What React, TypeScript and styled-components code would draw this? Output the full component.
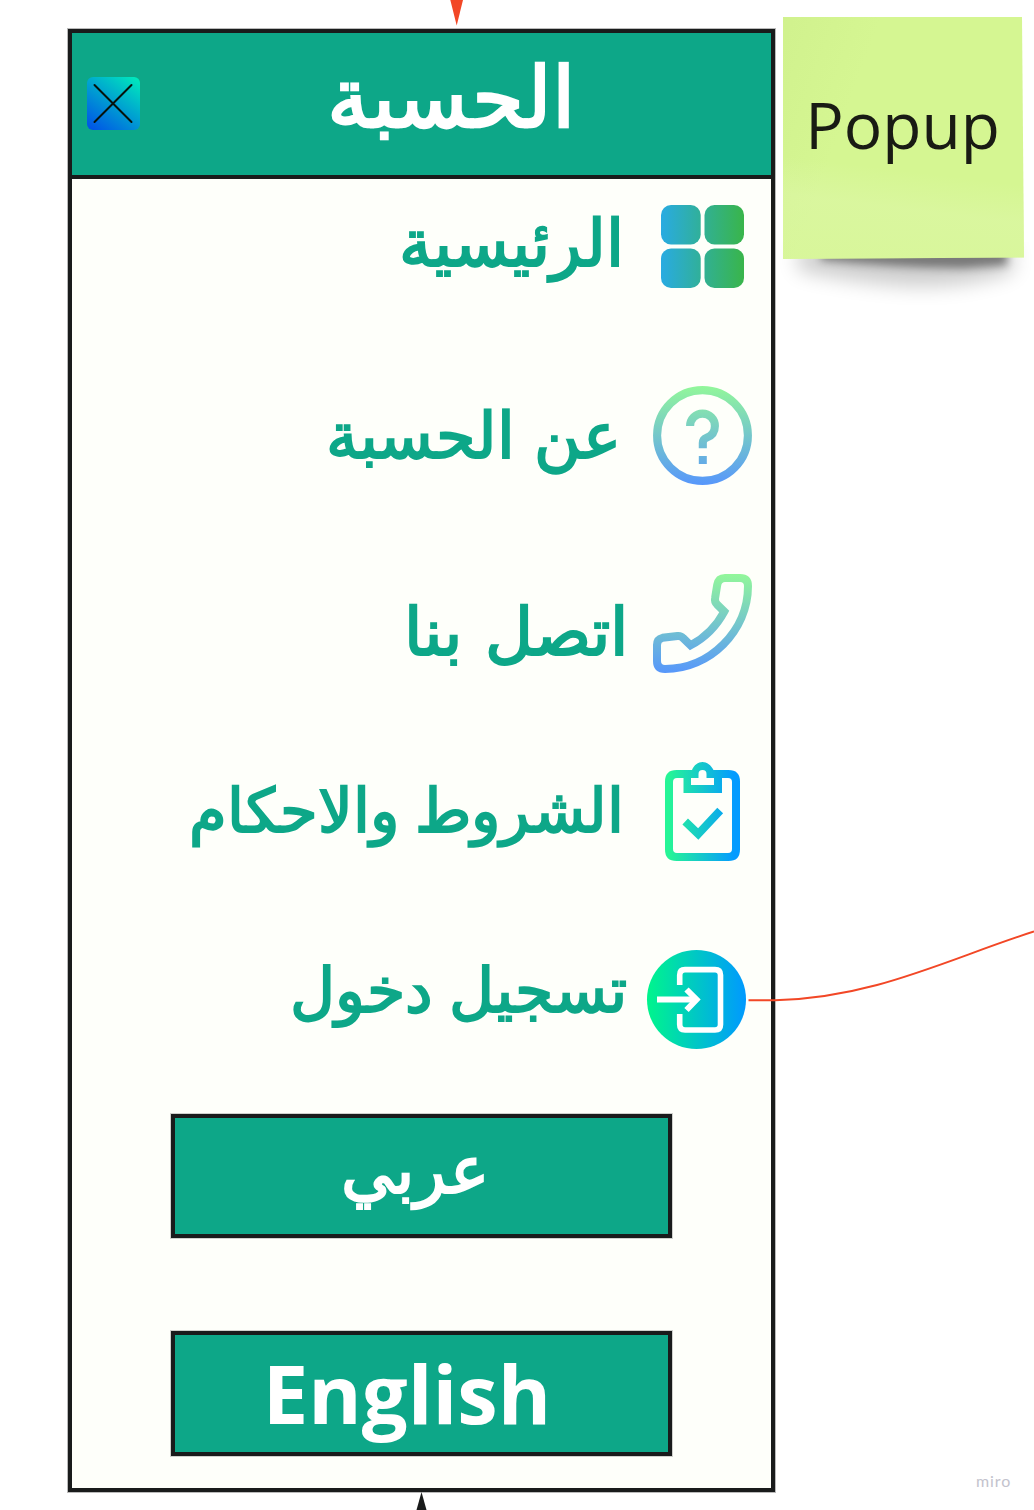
import React from "react";
import styled, { createGlobalStyle } from "styled-components";

const GlobalStyle = createGlobalStyle`
  *, *::before, *::after { box-sizing: border-box; }
  body { margin: 0; background: #fff; }
`;

const INK = "#191b1b";
const GREEN = "#0da788";
const PAPER = "#fefffa";
const FONT = `"Open Sans", serif`;

const Board = styled.main`
  position: relative;
  display: flex;
  align-items: flex-start;
  width: 1034px;
  height: 1510px;
  padding-left: 68px;
  overflow: hidden;
  background: #fff;
  font-family: ${FONT};
`;

const Phone = styled.section`
  display: flex;
  flex-direction: column;
  width: 707px;
  height: 1463px;
  margin-top: 29px;
  border: 4px solid ${INK};
  background: ${PAPER};
  box-shadow: 0 0 0 1px rgba(25, 27, 27, 0.3);
`;

const Header = styled.header`
  display: flex;
  align-items: center;
  height: 146px;
  padding-left: 15px;
  border-bottom: 4px solid ${INK};
  background: ${GREEN};
`;

const CloseButton = styled.button`
  display: block;
  width: 53px;
  height: 53px;
  margin-bottom: 2px;
  padding: 0;
  border: 0;
  border-radius: 6px;
  background: linear-gradient(36deg, #0056e6 5%, #00e6bd 95%);
  svg { display: block; }
`;

const Title = styled.h1`
  margin: 0 0 0 187px;
  padding-bottom: 18px;
  color: #fff;
  font-size: 83.5px;
  line-height: 124px;
  font-weight: 700;
  direction: rtl;
  white-space: nowrap;
`;

const Menu = styled.nav`
  display: flex;
  flex-direction: column;
  height: 935px;
`;

const Row = styled.a<{ $h: number; $end: number }>`
  display: flex;
  direction: rtl;
  align-items: center;
  height: ${p => p.$h}px;
  padding-right: ${p => p.$end}px;
  color: ${GREEN};
`;

const Label = styled.span<{ $size: number; $gap: number; $lift: number; $space?: number }>`
  margin-right: ${p => p.$gap}px;
  margin-bottom: ${p => p.$lift * 2}px;
  font-size: ${p => p.$size}px;
  line-height: 90px;
  font-weight: 700;
  word-spacing: ${p => p.$space ?? 0}px;
  white-space: nowrap;
`;

const IconBox = styled.svg`
  display: block;
  flex: none;
  overflow: visible;
`;

const LangButton = styled.button<{ $top: number; $h: number; $size: number; $shift: number; $lift: number }>`
  display: flex;
  align-items: center;
  justify-content: center;
  width: 501px;
  height: ${p => p.$h}px;
  margin: ${p => p.$top}px 0 0 99px;
  padding: 0 ${p => p.$shift}px ${p => p.$lift * 2}px 0;
  border: 4px solid ${INK};
  background: ${GREEN};
  box-shadow: 0 0 0 1px rgba(25, 27, 27, 0.2);
  color: #fff;
  font-family: ${FONT};
  font-size: ${p => p.$size}px;
  line-height: 1;
  font-weight: 700;
`;

const Note = styled.aside`
  position: relative;
  width: 241px;
  height: 242px;
  margin: 17px 0 0 8px;
`;

const NoteShadow = styled.svg`
  position: absolute;
  left: -10px;
  top: 225px;
`;

const NotePaper = styled.div`
  position: relative;
  display: flex;
  justify-content: center;
  width: 241px;
  height: 242px;
  padding: 64px 2px 0 0;
  clip-path: polygon(0 0, 239px 0, 239.5px 60px, 241px 240.5px, 0 242px);
  background:
    linear-gradient(187deg, transparent 62%, rgba(222, 247, 170, 0.5) 76%, rgba(222, 247, 170, 0.35) 100%),
    linear-gradient(110deg, rgba(205, 238, 138, 0.55) 0%, transparent 30%),
    #d5f692;
  color: #191b14;
  font-size: 64px;
  line-height: 88px;
`;

const Connectors = styled.svg`
  position: absolute;
  inset: 0;
  pointer-events: none;
`;

const Brand = styled.span`
  position: absolute;
  left: 976px;
  top: 1471px;
  color: #c3c3cd;
  font-family: Lato, sans-serif;
  font-size: 16px;
  line-height: 20px;
  letter-spacing: 0.9px;
`;

const CloseIcon = () => (
  <svg width="53" height="53" viewBox="0 0 53 53" fill="none" stroke="#06120c" strokeWidth="2" strokeLinecap="round">
    <path d="M7.5 8 44.5 45M44.5 8 7.5 45" />
  </svg>
);

const GridIcon = () => (
  <IconBox width="83" height="83" viewBox="0 0 83 83">
    <defs>
      <linearGradient id="grid" gradientUnits="userSpaceOnUse" x1="0" y1="0" x2="83" y2="0">
        <stop stopColor="#29abe2" /><stop offset="1" stopColor="#39b54a" />
      </linearGradient>
    </defs>
    <g fill="url(#grid)">
      <rect width="39.7" height="39.5" rx="10" />
      <rect x="43.5" width="39.5" height="39.5" rx="10" />
      <rect y="43.5" width="39.7" height="39.5" rx="10" />
      <rect x="43.5" y="43.5" width="39.5" height="39.5" rx="10" />
    </g>
  </IconBox>
);

const Fade = ({ id }: { id: string }) => (
  <defs>
    <linearGradient id={id} gradientUnits="userSpaceOnUse" x1="0" y1="0" x2="0" y2="99">
      <stop stopColor="#92f79a" /><stop offset="1" stopColor="#5797fb" />
    </linearGradient>
  </defs>
);

const HelpIcon = () => (
  <IconBox width="99" height="99" viewBox="0 0 99 99" fill="none">
    <Fade id="help" />
    <g stroke="url(#help)" strokeWidth="8.1">
      <circle cx="49.5" cy="49.5" r="45.4" />
      <path d="M37.1 40A12.4 12.4 0 1 1 61.9 40C61.9 46 58.5 50 53.5 51.8Q49.8 53.2 49.8 57V62.2" />
    </g>
    <rect x="45.8" y="70" width="8" height="8" fill="url(#help)" />
  </IconBox>
);

const PhoneIcon = () => (
  <IconBox width="99" height="99" viewBox="0 0 99 99" fill="none">
    <Fade id="call" />
    <path
      stroke="url(#call)"
      strokeWidth="8"
      d="M72 4H87Q95 4 95 12C95 57 57 95 12 95Q4 95 4 87V71Q4 65 9.5 63.8L24.500 62Q28 61.600 30 64L37.600 71.300C51.500 64 63.500 52 71.300 37.600L64 30.400Q61.400 27.600 62.100 24L64.200 11Q65.400 4 72 4Z"
    />
  </IconBox>
);

const ClipboardIcon = () => (
  <IconBox width="75" height="99" viewBox="0 0 75 99" fill="none">
    <defs>
      <linearGradient id="terms" gradientUnits="userSpaceOnUse" x1="0" y1="0" x2="75" y2="0">
        <stop offset="0.05" stopColor="#26f596" /><stop offset="0.92" stopColor="#049bff" />
      </linearGradient>
    </defs>
    <path
      fill="url(#terms)"
      fillRule="evenodd"
      d="M11.5 8H27C29 3 33 0 37.5 0S46 3 48.5 8H63.5Q75 8 75 19.5V87.5Q75 99 63.5 99H11.5Q0 99 0 87.5V19.5Q0 8 11.5 8ZM18.5 16H12Q8 16 8 20V87Q8 91 12 91H63Q67 91 67 87V20Q67 16 63 16H57V31H18.5ZM26 16V23H49V16H41.5V12Q41.5 8 37.5 8T33.5 12V16Z"
    />
    <path stroke="url(#terms)" strokeWidth="8" d="M20.2 59.5 33.2 72 55.2 48.5" />
  </IconBox>
);

const LoginIcon = () => (
  <IconBox width="99" height="99" viewBox="0 0 99 99" fill="none">
    <defs>
      <linearGradient id="login" gradientUnits="userSpaceOnUse" x1="0" y1="0" x2="99" y2="0">
        <stop stopColor="#00f58c" /><stop offset="1" stopColor="#0099ff" />
      </linearGradient>
    </defs>
    <circle cx="49.5" cy="49.5" r="49.5" fill="url(#login)" />
    <g stroke="#fff">
      <path strokeWidth="5.6" d="M32.7 35V25Q32.7 19.6 38 19.6H68Q73.5 19.6 73.5 25V74.5Q73.5 80 68 80H38Q32.7 80 32.7 74.5V64" />
      <path strokeWidth="6" d="M10 49.5H48" />
      <path strokeWidth="6" d="M39.5 39.500 49.500 49.500 39.500 60" />
    </g>
  </IconBox>
);

const rows = [
  { text: "الرئيسية", icon: <GridIcon />, h: 135, end: 27, size: 64.5, gap: 37, lift: 6 },
  { text: "عن الحسبة", icon: <HelpIcon />, h: 243, end: 19, size: 64, gap: 32, lift: 2, space: 2 },
  { text: "اتصل بنا", icon: <PhoneIcon />, h: 132, end: 19, size: 66, gap: 25, lift: -6, space: 6 },
  { text: "الشروط والاحكام", icon: <ClipboardIcon />, h: 245, end: 31, size: 61, gap: 41, lift: 3 },
  { text: "تسجيل دخول", icon: <LoginIcon />, h: 131, end: 25, size: 62.3, gap: 20, lift: 12 },
];

export default function App() {
  return (
    <Board>
      <GlobalStyle />
      <Phone>
        <Header>
          <CloseButton aria-label="إغلاق"><CloseIcon /></CloseButton>
          <Title>الحسبة</Title>
        </Header>
        <Menu>
          {rows.map(r => (
            <Row key={r.text} $h={r.h} $end={r.end}>
              {r.icon}
              <Label $size={r.size} $gap={r.gap} $lift={r.lift} $space={r.space}>{r.text}</Label>
            </Row>
          ))}
        </Menu>
        <LangButton $top={0} $h={124} $size={66} $shift={13} $lift={9}>عربي</LangButton>
        <LangButton $top={93} $h={125} $size={81.3} $shift={29} $lift={0.5}>English</LangButton>
      </Phone>
      <Note>
        <NoteShadow width="270" height="90" viewBox="0 0 270 90">
          <defs>
            <filter id="soft" x="-20%" y="-100%" width="140%" height="300%"><feGaussianBlur stdDeviation="10" /></filter>
            <filter id="tight" x="-20%" y="-100%" width="140%" height="300%"><feGaussianBlur stdDeviation="4" /></filter>
          </defs>
          <path d="M25 5H240V30Q190 46 140 44T25 28Z" fill="#000" opacity=".2" filter="url(#soft)" />
          <path d="M48 5H234V23L190 26Q120 25 48 18Z" fill="#000" opacity=".42" filter="url(#tight)" />
        </NoteShadow>
        <NotePaper>Popup</NotePaper>
      </Note>
      <Connectors width="1034" height="1510" viewBox="0 0 1034 1510" fill="none">
        <path d="M450.3 0H463L456.7 25.5Z" fill="#f24726" />
        <path d="M748.5 1000.2H775C875 998 950 958 1034 931.5" stroke="#f24726" strokeWidth="2" />
        <path d="M421.5 1492 426.5 1510H416.5Z" fill={INK} />
      </Connectors>
      <Brand>miro</Brand>
    </Board>
  );
}
